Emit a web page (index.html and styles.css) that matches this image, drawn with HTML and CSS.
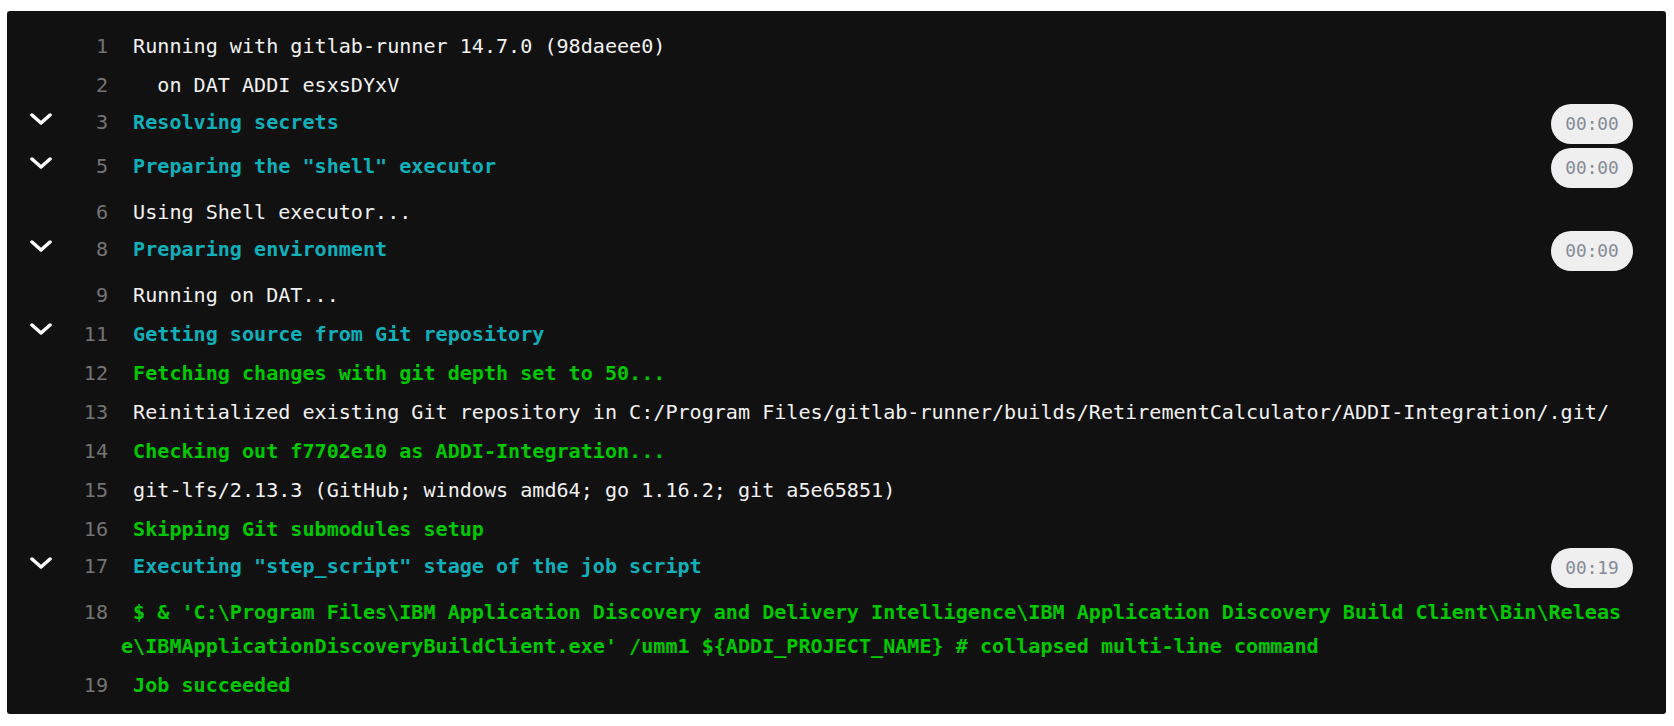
FILE: index.html
```html
<!DOCTYPE html>
<html>
<head lang="en">
    <meta charset="UTF-8">
    <title>Job log</title>
    <link rel="stylesheet" href="styles.css">
</head>
<body>
<div class="log">
    <div class="line"><span class="toggle"></span><span class="num">1</span><span class="text">Running with gitlab-runner 14.7.0 (98daeee0)</span></div>
    <div class="line"><span class="toggle"></span><span class="num">2</span><span class="text">  on DAT ADDI esxsDYxV</span></div>
    <div class="line section">
        <span class="toggle"><svg width="22" height="12" viewBox="0 0 22 12"><polyline points="2,2 11,10 20,2"/></svg></span>
        <span class="num">3</span><span class="text cyan">Resolving secrets</span><span class="dur">00:00</span>
    </div>
    <div class="line section">
        <span class="toggle"><svg width="22" height="12" viewBox="0 0 22 12"><polyline points="2,2 11,10 20,2"/></svg></span>
        <span class="num">5</span><span class="text cyan">Preparing the "shell" executor</span><span class="dur">00:00</span>
    </div>
    <div class="line"><span class="toggle"></span><span class="num">6</span><span class="text">Using Shell executor...</span></div>
    <div class="line section">
        <span class="toggle"><svg width="22" height="12" viewBox="0 0 22 12"><polyline points="2,2 11,10 20,2"/></svg></span>
        <span class="num">8</span><span class="text cyan">Preparing environment</span><span class="dur">00:00</span>
    </div>
    <div class="line"><span class="toggle"></span><span class="num">9</span><span class="text">Running on DAT...</span></div>
    <div class="line">
        <span class="toggle"><svg width="22" height="12" viewBox="0 0 22 12"><polyline points="2,2 11,10 20,2"/></svg></span>
        <span class="num">11</span><span class="text cyan">Getting source from Git repository</span>
    </div>
    <div class="line"><span class="toggle"></span><span class="num">12</span><span class="text green">Fetching changes with git depth set to 50...</span></div>
    <div class="line"><span class="toggle"></span><span class="num">13</span><span class="text">Reinitialized existing Git repository in C:/Program Files/gitlab-runner/builds/RetirementCalculator/ADDI-Integration/.git/</span></div>
    <div class="line"><span class="toggle"></span><span class="num">14</span><span class="text green">Checking out f7702e10 as ADDI-Integration...</span></div>
    <div class="line"><span class="toggle"></span><span class="num">15</span><span class="text">git-lfs/2.13.3 (GitHub; windows amd64; go 1.16.2; git a5e65851)</span></div>
    <div class="line"><span class="toggle"></span><span class="num">16</span><span class="text green">Skipping Git submodules setup</span></div>
    <div class="line section">
        <span class="toggle"><svg width="22" height="12" viewBox="0 0 22 12"><polyline points="2,2 11,10 20,2"/></svg></span>
        <span class="num">17</span><span class="text cyan">Executing "step_script" stage of the job script</span><span class="dur">00:19</span>
    </div>
    <div class="line"><span class="toggle"></span><span class="num">18</span><span class="text green">$ &amp; 'C:\Program Files\IBM Application Discovery and Delivery Intelligence\IBM Application Discovery Build Client\Bin\Release\IBMApplicationDiscoveryBuildClient.exe' /umm1 ${ADDI_PROJECT_NAME} # collapsed multi-line command</span></div>
    <div class="line"><span class="toggle"></span><span class="num">19</span><span class="text green">Job succeeded</span></div>
</div>
</body>
</html>
```
FILE: styles.css
```css
*{margin:0;padding:0;box-sizing:border-box;}
body{background:#fff;padding:11px 8px 12px 7px;font-family:"DejaVu Sans Mono","Liberation Mono",monospace;}
.log{background:#111;border-radius:3px;padding:15px 33px 10px 0;}
.line{display:flex;align-items:flex-start;min-height:39px;}
.line.section{min-height:44px;}
.line.section .text,.line.section .num{padding-top:1px;}
.toggle{flex:none;width:68px;display:flex;justify-content:center;padding-top:9px;}
.toggle svg polyline{fill:none;stroke:#fff;stroke-width:3.5;stroke-linecap:round;stroke-linejoin:round;}
.num{flex:none;width:33px;text-align:right;color:#747474;font-size:20.1px;line-height:34px;padding-top:2.5px;}
.text{flex:1;min-width:0;margin-left:13px;padding:2.5px 3px 2.5px 0;font-size:20.1px;line-height:34px;color:#f2f2f2;white-space:pre-wrap;word-break:break-all;text-indent:1ch;}
.cyan{color:#0fb0ba;font-weight:bold;}
.green{color:#00c800;font-weight:bold;}
.dur{flex:none;width:82px;height:40px;border-radius:20px;background:#efefef;color:#858b98;font-size:17.8px;line-height:40px;text-align:center;}
```
